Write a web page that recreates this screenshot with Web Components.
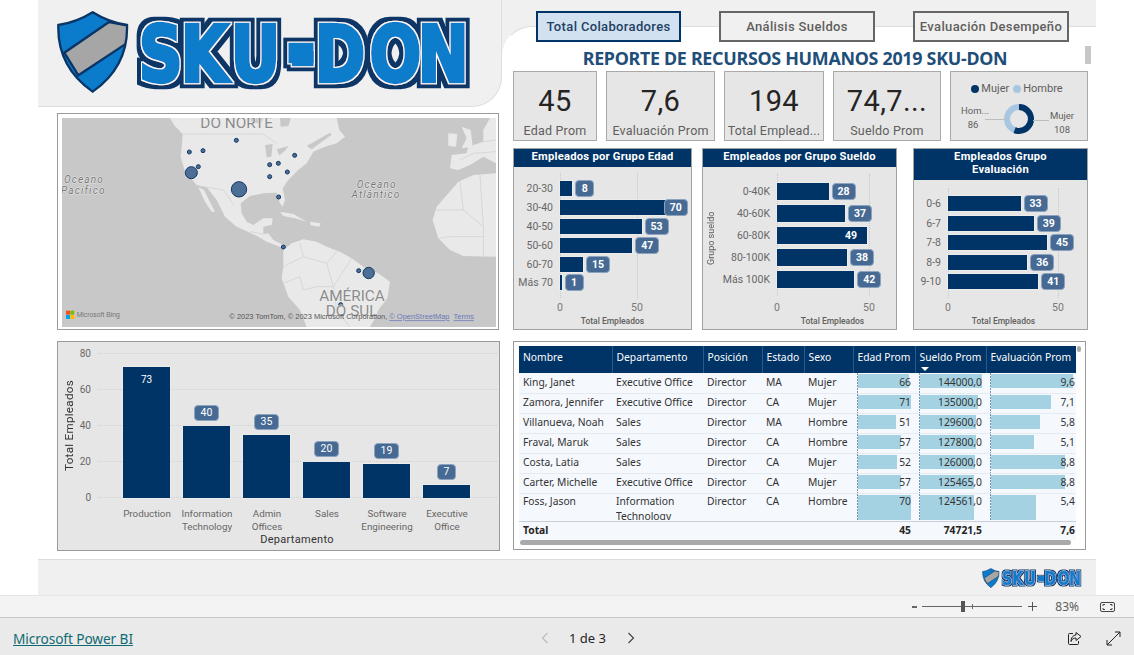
<!DOCTYPE html>
<html lang="es">
<head>
<meta charset="utf-8">
<title>Reporte SKU-DON</title>
<style>
  html, body { margin: 0; height: 655px; overflow: hidden; background: #fff; font-family: "Noto Sans", "Liberation Sans", sans-serif; }
</style>
</head>
<body>
<report-shell>
  <sku-logo slot="brand" width="420"></sku-logo>
  <map-card slot="map"></map-card>
  <column-card slot="columns"></column-card>

  <report-tab slot="tabs" active style="width:145px">Total Colaboradores</report-tab>
  <report-tab slot="tabs" style="width:156px">Análisis Sueldos</report-tab>
  <report-tab slot="tabs" style="width:156px">Evaluación Desempeño</report-tab>

  <kpi-card slot="kpis" data-value="45" data-label="Edad Prom" style="width:84px"></kpi-card>
  <kpi-card slot="kpis" data-value="7,6" data-label="Evaluación Prom" style="width:109px"></kpi-card>
  <kpi-card slot="kpis" data-value="194" data-label="Total Emplead..." style="width:100px"></kpi-card>
  <kpi-card slot="kpis" data-value="74,7..." data-label="Sueldo Prom" style="width:108px"></kpi-card>
  <gender-donut slot="kpis" style="width:138px"></gender-donut>

  <hbar-card slot="charts" style="width:179px" data-title="Empleados por Grupo Edad" data-label-w="46" data-unit="1.54" data-pitch="18.9" data-bar="15" data-top="12"
    data-items='[["20-30",8],["30-40",70,"clamp"],["40-50",53],["50-60",47],["60-70",15],["Más 70",1]]'></hbar-card>
  <hbar-card slot="charts" style="width:195px;margin-left:1px" data-title="Empleados por Grupo Sueldo" data-axis="Grupo sueldo" data-label-w="74" data-unit="1.84" data-pitch="22" data-bar="17" data-top="13"
    data-items='[["0-40K",28],["40-60K",37],["60-80K",49,"in"],["80-100K",38],["Más 100K",42]]'></hbar-card>
  <hbar-card slot="charts" style="width:175px;margin-left:7px" data-title="Empleados Grupo Evaluación" data-wrap="1" data-label-w="34" data-unit="2.2" data-pitch="19.5" data-bar="15" data-top="14"
    data-items='[["0-6",33],["6-7",39],["7-8",45],["8-9",36],["9-10",41]]'></hbar-card>

  <staff-table slot="table"></staff-table>
  <sku-logo slot="footer" width="101"></sku-logo>
</report-shell>
<zoom-bar></zoom-bar>
<page-bar></page-bar>

<script>
const DIN = '"Roboto", "Liberation Sans", sans-serif';
const NAVY = '#003366';

class ReportShell extends HTMLElement {
  constructor() {
    super();
    this.attachShadow({ mode: 'open' });
  }

  connectedCallback() {
    this.shadowRoot.innerHTML = `
      <style>
        :host { display: block; width: 1058px; height: 595px; margin-left: 38px; }
        .main { display: grid; grid-template-columns: 464px 594px; height: 559px; }
        .left { display: flex; flex-direction: column; }
        .brand {
          box-sizing: border-box; height: 107px; padding: 10px 0 0 18px; background: #f0f0f0;
          border-right: 1px solid #dedede; border-bottom: 1px solid #dedede; border-bottom-right-radius: 30px;
        }
        .mapslot { padding: 6px 0 0 19px; }
        .colslot { padding: 11px 0 0 19px; }
        .right { background: linear-gradient(#f0f0f0 70px, #fff 70px); }
        .panel {
          box-sizing: border-box; height: 533px; margin-top: 26px; padding-left: 10px; background: #fff;
          border-top: 1px solid #dedede; border-left: 1px solid transparent; border-top-left-radius: 30px;
          display: flex; flex-direction: column;
        }
        .tabs { display: flex; gap: 38px; margin: -16px 0 0 23px; }
        h1 {
          margin: 6px 0 0 0; height: 21px; padding-right: 19px; font: 700 17.9px/21px "Noto Sans", sans-serif; color: #1f4e79;
          text-align: center; letter-spacing: -.3px; white-space: nowrap;
        }
        .thumb { width: 6px; height: 18px; background: #c8c8c8; margin: -23px 0 0 572px; }
        .kpis { display: flex; gap: 9px; margin-top: 7px; }
        .charts { display: flex; gap: 9px; margin-top: 7px; }
        .table { margin-top: 11px; }
        .foot {
          box-sizing: border-box; height: 36px; background: #f0f0f0; border-top: 1px solid #dcdcdc;
          display: flex; justify-content: flex-end; padding: 8px 13px 0 0;
        }
      </style>
      <div class="main">
        <div class="left">
          <div class="brand"><slot name="brand"></slot></div>
          <div class="mapslot"><slot name="map"></slot></div>
          <div class="colslot"><slot name="columns"></slot></div>
        </div>
        <div class="right">
          <div class="panel">
            <div class="tabs"><slot name="tabs"></slot></div>
            <h1>REPORTE DE RECURSOS HUMANOS 2019 SKU-DON</h1>
            <div class="thumb"></div>
            <div class="kpis"><slot name="kpis"></slot></div>
            <div class="charts"><slot name="charts"></slot></div>
            <div class="table"><slot name="table"></slot></div>
          </div>
        </div>
      </div>
      <div class="foot"><slot name="footer"></slot></div>
    `;
  }
}

class SkuLogo extends HTMLElement {
  constructor() {
    super();
    this.attachShadow({ mode: 'open' });
  }

  connectedCallback() {
    const w = Number(this.getAttribute('width'));
    const h = w * 250 / 1260;
    // pen position of each letter, squeezed by scaleX below
    const xs = [304, 430, 580, 758, 832, 996, 1141].map(x => (x / 0.78).toFixed(1)).join(' ');
    this.shadowRoot.innerHTML = `
      <style>:host { display: block; } svg { display: block; }</style>
      <svg width="${w}" height="${h}" viewBox="55 30 1260 250">
        <defs>
          <filter id="edge" filterUnits="userSpaceOnUse" x="280" y="30" width="1040" height="250">
            <feMorphology in="SourceAlpha" operator="dilate" radius="4" result="w"/>
            <feMorphology in="SourceAlpha" operator="dilate" radius="15" result="n"/>
            <feFlood flood-color="#fff"/>
            <feComposite in2="w" operator="in" result="wf"/>
            <feFlood flood-color="#0a3566"/>
            <feComposite in2="n" operator="in" result="nf"/>
            <feMerge>
              <feMergeNode in="nf"/>
              <feMergeNode in="wf"/>
              <feMergeNode in="SourceGraphic"/>
            </feMerge>
          </filter>
          <clipPath id="shield"><path d="M165 37Q215 68 268 75Q272 200 165 275Q58 200 62 75Q115 68 165 37Z"/></clipPath>
        </defs>
        <path d="M165 37Q215 68 268 75Q272 200 165 275Q58 200 62 75Q115 68 165 37Z" fill="#0a7ccb"/>
        <g clip-path="url(#shield)">
          <path d="M214 66L280 78L270 128L122 226L80 158Z" fill="#a6a6a6" stroke="#0a3566" stroke-width="7"/>
        </g>
        <path d="M165 37Q215 68 268 75Q272 200 165 275Q58 200 62 75Q115 68 165 37Z" fill="none" stroke="#0a3566" stroke-width="7"/>
        <g filter="url(#edge)">
          <text transform="scale(.78 1)" x="${xs}" y="244" font-family="DejaVu Sans" font-weight="700" font-size="232"
            fill="#0a7ccb" stroke="#0a7ccb" stroke-width="13" stroke-linejoin="miter">SKU-DON</text>
          <rect x="752" y="128" width="76" height="62" fill="#0a7ccb"/>
        </g>
      </svg>
    `;
  }
}

class ReportTab extends HTMLElement {
  constructor() {
    super();
    this.attachShadow({ mode: 'open' });
  }

  connectedCallback() {
    const active = this.hasAttribute('active');
    this.shadowRoot.innerHTML = `
      <style>
        :host {
          display: flex; align-items: center; justify-content: center; box-sizing: border-box; height: 31px;
          border: 2px solid ${active ? NAVY : '#666'}; background: ${active ? '#d2e1f0' : '#f0f0f0'};
          color: ${active ? '#1f3f63' : '#605e5c'}; font: 500 13px ${DIN}; letter-spacing: .35px; white-space: nowrap;
        }
      </style>
      <slot></slot>
    `;
  }
}

class KpiCard extends HTMLElement {
  constructor() {
    super();
    this.attachShadow({ mode: 'open' });
  }

  connectedCallback() {
    this.shadowRoot.innerHTML = `
      <style>
        :host {
          display: flex; flex-direction: column; align-items: center; box-sizing: border-box; height: 70px;
          background: #e6e6e6; border: 1px solid #a9a9a9; font-family: ${DIN}; overflow: hidden;
        }
        .v { margin-top: 11px; height: 36px; font-size: 29px; line-height: 36px; color: #252423; letter-spacing: .4px; }
        .l { margin-top: 4px; font-size: 12.5px; line-height: 16px; color: #605e5c; letter-spacing: .2px; white-space: nowrap; }
      </style>
      <div class="v">${this.dataset.value}</div>
      <div class="l">${this.dataset.label}</div>
    `;
  }
}

class GenderDonut extends HTMLElement {
  constructor() {
    super();
    this.attachShadow({ mode: 'open' });
  }

  connectedCallback() {
    const c = 2 * Math.PI * 12;
    const m = c * 108 / 194;
    this.shadowRoot.innerHTML = `
      <style>
        :host {
          display: flex; flex-direction: column; box-sizing: border-box; height: 70px; background: #e6e6e6;
          border: 1px solid #a9a9a9; color: #605e5c; font: 10.5px ${DIN};
        }
        .legend { display: flex; justify-content: center; gap: 4px; margin-top: 10px; padding-right: 4px; height: 14px; line-height: 14px; font-size: 11px; }
        .legend span { display: flex; align-items: center; gap: 2px; }
        i { width: 8px; height: 8px; border-radius: 50%; }
        .row { display: flex; align-items: center; margin-top: 3px; padding-left: 10px; }
        .a, .b { font-size: 9.5px; line-height: 14px; text-align: center; }
        .a { width: 24px; margin-top: -1px; }
        .b { width: 26px; margin-top: 10px; }
        .lead { height: 1px; background: #bdbdbd; width: 20px; margin-top: 2px; }
        svg { display: block; margin: 2px -2px 0; }
      </style>
      <div class="legend">
        <span><i style="background:${NAVY}"></i>Mujer</span>
        <span><i style="background:#a9c6e0"></i>Hombre</span>
      </div>
      <div class="row">
        <div class="a">Hom...<br>86</div>
        <div class="lead"></div>
        <svg width="32" height="32" viewBox="0 0 32 32">
          <circle cx="16" cy="16" r="12" fill="none" stroke="#a9c6e0" stroke-width="6"/>
          <circle cx="16" cy="16" r="12" fill="none" stroke="${NAVY}" stroke-width="6" stroke-dasharray="${m} ${c}" transform="rotate(-90 16 16)"/>
        </svg>
        <div class="lead" style="width:16px;margin-top:4px"></div>
        <div class="b">Mujer<br>108</div>
      </div>
    `;
  }
}

class MapCard extends HTMLElement {
  constructor() {
    super();
    this.attachShadow({ mode: 'open' });
  }

  connectedCallback() {
    const pins = [[559,91,6],[418,126,6],[459,122,6],[445,170,6],[424,188,18],[567,238,23],[659,164,6],[685,160,6],[734,136,6],[712,186,6],[659,200,6],[686,261,6],[700,411,6],[926,482,6],[956,489,17],[872,584,6]];
    this.shadowRoot.innerHTML = `
      <style>
        :host { display: block; box-sizing: border-box; width: 442px; height: 217px; padding: 4px 2px 2px 4px; background: #fff; border: 1px solid #9a9a9a; }
        svg { display: block; }
        .lbl { font-family: ${DIN}; fill: #8b8b8b; stroke: #f2f2f2; stroke-width: 3; paint-order: stroke; text-anchor: middle; }
        .sea { font-family: ${DIN}; font-style: italic; font-size: 30px; letter-spacing: 3.5px; fill: #777; stroke: #e8e8e8; stroke-width: 3; paint-order: stroke; text-anchor: middle; }
        .cr { font: 22.4px "Liberation Sans", sans-serif; fill: #555; }
        .ln { fill: #6a78b8; text-decoration: underline; }
      </style>
      <svg width="434" height="209" viewBox="36 24 1302 627" preserveAspectRatio="none">
        <rect x="36" y="24" width="1302" height="627" fill="#c8c8c8"/>
        <g fill="#e9e9e9">
          <path d="M360 24L372 45L398 72L396 100L392 140L405 185L440 225L470 232L500 270L525 320L560 350L600 368L625 380L650 395L690 410L705 418L700 405L670 390L655 370L640 372L640 350L665 345L668 325L640 325L610 345L590 335L575 310L572 280L600 258L640 250L680 248L690 280L698 290L705 270L698 235L715 210L745 180L770 160L790 125L825 110L860 100L885 80L868 60L860 24Z"/>
          <path d="M445 232L462 240L478 272L495 306L485 305L465 275Z"/>
          <path d="M700 420L725 400L760 388L800 395L830 410L870 425L905 445L940 470L985 490L1020 515L1012 565L985 600L975 625L960 651L770 651L750 600L715 560L695 505L700 470Z"/>
          <path d="M690 305L730 312L770 335L735 325L700 318Z"/>
          <path d="M780 335L812 340L808 350L782 346Z"/>
          <path d="M1148 330L1160 290L1195 250L1225 215L1270 195L1338 190L1338 440L1240 438L1200 420L1165 385Z"/>
          <path d="M1200 175L1205 135L1250 130L1255 110L1300 95L1300 60L1320 24L1338 24L1338 160L1300 140L1260 165L1225 180Z"/>
          <path d="M1235 50L1262 60L1268 110L1235 115L1250 85Z"/>
          <path d="M1195 70L1222 72L1218 110L1195 108Z"/>
        </g>
        <g fill="#c8c8c8">
          <path d="M645 105L668 102L664 140L650 142Z"/>
          <path d="M680 118L715 108L705 122L688 136Z"/>
          <path d="M770 108L840 68L845 74L785 118Z"/>
          <path d="M690 24L722 24L715 48L692 50Z"/>
          <path d="M600 24L640 24L632 40L606 38Z"/>
        </g>
        <g fill="none" stroke="#d2d2d2" stroke-width="2.5">
          <path d="M395 72H640L680 100"/>
          <path d="M446 228L520 240L552 285"/>
          <path d="M600 365L640 372"/>
          <path d="M750 400L760 440L700 470"/>
          <path d="M760 440L830 460L860 425M830 460L850 530L905 445"/>
          <path d="M700 520L750 500L760 540L800 530L850 530L860 600L900 651"/>
          <path d="M1160 300H1240L1300 350V440M1230 215L1240 300M1200 380H1300M1165 385L1200 380M1290 195L1300 350"/>
          <path d="M1230 150L1270 130L1338 125M1300 95L1338 90"/>
        </g>
        ${pins.map(([x, y, r]) => `<circle cx="${x}" cy="${y}" r="${r}" fill="#4d6e96" stroke="#133563" stroke-width="3"/>`).join('')}
        <text class="lbl" x="560" y="54" font-size="46">DO NORTE</text>
        <text class="lbl" x="906" y="572" font-size="46">AMÉRICA</text>
        <text class="lbl" x="905" y="618" font-size="46">DO SUL</text>
        <text class="sea" x="102" y="219">Oceano</text>
        <text class="sea" x="100" y="251">Pacífico</text>
        <text class="sea" x="980" y="233">Oceano</text>
        <text class="sea" x="978" y="265">Atlântico</text>
        <rect x="48" y="602" width="12" height="12" fill="#f25022"/>
        <rect x="61" y="602" width="12" height="12" fill="#7fba00"/>
        <rect x="48" y="615" width="12" height="12" fill="#00a4ef"/>
        <rect x="61" y="615" width="12" height="12" fill="#ffb900"/>
        <text class="cr" x="80" y="621" style="fill:#777;font-size:20.5px">Microsoft Bing</text>
        <text class="cr" x="538" y="628">© 2023 TomTom, © 2023 Microsoft Corporation, <tspan class="ln">© OpenStreetMap</tspan>  <tspan class="ln" dx="6">Terms</tspan></text>
      </svg>
    `;
  }
}

class HbarCard extends HTMLElement {
  constructor() {
    super();
    this.attachShadow({ mode: 'open' });
  }

  connectedCallback() {
    const d = this.dataset;
    const items = JSON.parse(d.items);
    const unit = Number(d.unit);
    const pitch = Number(d.pitch);
    const bar = Number(d.bar);
    const labelW = Number(d.labelW);
    const rows = items.map(([label, value, mode]) => `
      <div class="row">
        <div class="cat">${label}</div>
        <div class="bar" style="width:${value * unit}px">${mode === 'in' ? `<span class="in">${value}</span>` : ''}</div>
        ${mode === 'in' ? '' : `<div class="pill" style="width:${value > 9 ? 24 : 19}px;margin-left:${mode === 'clamp' ? -4 : 3}px">${value}</div>`}
      </div>`).join('');
    this.shadowRoot.innerHTML = `
      <style>
        :host {
          display: flex; flex-direction: column; box-sizing: border-box; height: 182px; background: #e6e6e6;
          border: 1px solid #a2a2a2; font-family: ${DIN}; color: #605e5c; position: relative;
        }
        header {
          background: ${NAVY}; color: #fff; font-weight: 700; font-size: 11.2px; line-height: 13px; text-align: center;
          padding: ${d.wrap ? '1px 30px 4px' : '1px 4px 4px'}; letter-spacing: .25px;
        }
        .plot { position: relative; margin: ${d.top}px 0 0 ${labelW}px; }
        .grid { position: absolute; top: -6px; bottom: -6px; width: 0; border-left: 1px dotted #c9c9c9; }
        .row { position: relative; display: flex; align-items: center; height: ${pitch}px; }
        .cat { position: absolute; right: 100%; margin-right: 7px; font-size: 10.5px; white-space: nowrap; color: #666; }
        .bar { display: flex; align-items: center; justify-content: flex-end; height: ${bar}px; background: ${NAVY}; box-shadow: 0 0 0 .5px #fff8; }
        .in { color: #fff; font-size: 10.5px; font-weight: 700; margin-right: 10px; }
        .pill {
          position: relative; box-sizing: border-box; height: 17px; background: #466a93; border: 1px solid #8ba3bf; border-radius: 4px;
          color: #fff; font-size: 10.5px; font-weight: 700; line-height: 15px; text-align: center;
        }
        .ticks { display: flex; gap: ${50 * unit}px; margin-left: ${labelW}px; position: absolute; top: 152px; font-size: 10.5px; color: #777; }
        .ticks span { width: 0; display: flex; justify-content: center; }
        .title { position: absolute; top: 167px; left: ${labelW}px; right: 0; padding-right: ${d.axis ? 8 : labelW === 34 ? 28 : 26}px; text-align: center; font-size: 8.5px; font-weight: 500; color: #605e5c; white-space: nowrap; }
        .axis { position: absolute; left: 3px; top: 52px; height: 74px; writing-mode: vertical-rl; transform: rotate(180deg); text-align: center; font-size: 9px; color: #605e5c; white-space: nowrap; }
      </style>
      <header>${d.title}</header>
      <div class="plot">
        <div class="grid" style="left:0"></div>
        <div class="grid" style="left:${50 * unit}px"></div>
        ${rows}
      </div>
      <div class="ticks"><span>0</span><span>50</span></div>
      <div class="title">Total Empleados</div>
      ${d.axis ? `<div class="axis">${d.axis}</div>` : ''}
    `;
  }
}

class ColumnCard extends HTMLElement {
  constructor() {
    super();
    this.attachShadow({ mode: 'open' });
  }

  connectedCallback() {
    const data = [['Production', 73, 'in'], ['Information<br>Technology', 40], ['Admin<br>Offices', 35], ['Sales', 20], ['Software<br>Engineering', 19], ['Executive<br>Office', 7]];
    this.shadowRoot.innerHTML = `
      <style>
        :host {
          display: block; box-sizing: border-box; width: 443px; height: 210px; background: #e6e6e6;
          border: 1px solid #9a9a9a; font-family: ${DIN}; color: #605e5c; padding: 11px 0 0 5px;
        }
        .top { display: flex; height: 145px; }
        .ytitle { width: 12px; writing-mode: vertical-rl; transform: rotate(180deg); text-align: center; font-size: 11.6px; line-height: 12px; color: #333; letter-spacing: .3px; white-space: nowrap; }
        .ticks { width: 16px; margin-right: 7px; display: flex; flex-direction: column; justify-content: space-between; font-size: 10px; color: #666; text-align: right; }
        .ticks div { height: 1px; line-height: 1px; }
        .plot { position: relative; width: 399px; display: flex; align-items: flex-end; gap: 13px; padding-left: 25px; box-sizing: border-box; }
        .lines { position: absolute; inset: 0; display: flex; flex-direction: column; justify-content: space-between; }
        .lines div { border-top: 1px dotted #d0d0d0; }
        .col { position: relative; width: 47px; display: flex; flex-direction: column; align-items: center; }
        .bar { width: 47px; background: ${NAVY}; color: #fff; font-size: 10px; text-align: center; padding-top: 7px; box-sizing: border-box; box-shadow: 0 0 0 .5px #fff8; }
        .pill {
          box-sizing: border-box; height: 16px; margin-bottom: 5px; background: #466a93; border: 1px solid #8ba3bf;
          border-radius: 4px; color: #fff; font-size: 10.5px; line-height: 14px; text-align: center;
        }
        .names { display: flex; margin: 9px 0 0 54px; }
        .names div { width: 60px; text-align: center; font-size: 9.8px; line-height: 13px; color: #666; }
        .xtitle { padding-left: 18px; width: 432px; text-align: center; font-size: 11px; line-height: 13px; color: #333; letter-spacing: .3px; }
      </style>
      <div class="top">
        <div class="ytitle">Total Empleados</div>
        <div class="ticks"><div>80</div><div>60</div><div>40</div><div>20</div><div>0</div></div>
        <div class="plot">
          <div class="lines"><div></div><div></div><div></div><div></div><div></div></div>
          ${data.map(([, v, mode]) => `
            <div class="col">
              ${mode === 'in' ? '' : `<div class="pill" style="width:${v > 9 ? 25 : 19}px">${v}</div>`}
              <div class="bar" style="height:${v * 1.8}px">${mode === 'in' ? v : ''}</div>
            </div>`).join('')}
        </div>
      </div>
      <div class="names">${data.map(([n]) => `<div>${n}</div>`).join('')}</div>
      <div class="xtitle">Departamento</div>
    `;
  }
}

class StaffTable extends HTMLElement {
  constructor() {
    super();
    this.attachShadow({ mode: 'open' });
  }

  dataBar(text, start, width, height, pad) {
    const fill = `linear-gradient(#a4d2e2,#a4d2e2) ${start}px 1px / ${width}px ${height}px no-repeat`;
    const axis = `repeating-linear-gradient(#6f97b0 0 2px, transparent 2px 3px) ${start - 1}px 0 / 1px 100% no-repeat`;
    return `<td class="num" style="background:${axis},${fill};padding-right:${pad}px">${text}</td>`;
  }

  connectedCallback() {
    const rows = [
      ['King, Janet', 'Executive Office', 'MA', 'Mujer', 66, 51, '144000,0', 62, '9,6', 82],
      ['Zamora, Jennifer', 'Executive Office', 'CA', 'Mujer', 71, 53, '135000,0', 58, '7,1', 60],
      ['Villanueva, Noah', 'Sales', 'MA', 'Hombre', 51, 38, '129600,0', 56, '5,8', 49],
      ['Fraval, Maruk', 'Sales', 'CA', 'Hombre', 57, 43, '127800,0', 56, '5,1', 43],
      ['Costa, Latia', 'Sales', 'CA', 'Mujer', 52, 39, '126000,0', 55, '8,8', 74],
      ['Carter, Michelle', 'Executive Office', 'CA', 'Mujer', 57, 43, '125465,0', 54, '8,8', 74],
      ['Foss, Jason', 'Information Technology', 'CA', 'Hombre', 70, 53, '124561,0', 54, '5,4', 45]
    ];
    const body = rows.map((r, i) => {
      const h = i === 6 ? 25 : 14;
      return `<tr class="${i === 6 ? 'tall' : ''}">
        <td>${r[0]}</td><td><div class="clip">${r[1]}</div></td><td>Director</td><td>${r[2]}</td><td>${r[3]}</td>
        ${this.dataBar(r[4], 5, r[5], h, 4)}${this.dataBar(r[6], 5, r[7], h, 4)}${this.dataBar(r[8], 5, r[9], h, 1)}
      </tr>`;
    }).join('');
    this.shadowRoot.innerHTML = `
      <style>
        :host { display: flex; box-sizing: border-box; width: 573px; height: 209px; padding: 4px 4px 0 5px; background: #fff; border: 1px solid #9a9a9a; }
        .thumb { width: 4px; height: 6px; margin-left: 1px; border-radius: 2px; background: #aaa; }
        table { border-collapse: collapse; table-layout: fixed; width: 557px; font: 10.3px/14px "Noto Sans", sans-serif; color: #333; background: #f5f8fd; }
        th { height: 27px; padding: 0 3px 6px 4px; background: ${NAVY}; color: #fff; font-weight: 400; text-align: left; border-left: 1px solid #2c5a88; white-space: nowrap; box-sizing: border-box; }
        th:first-child { border-left: 0; }
        th.sort { position: relative; }
        th.sort::after { content: ""; position: absolute; left: 5px; bottom: 2px; border: 4px solid transparent; border-top-color: #fff; border-bottom: 0; }
        td { height: 20px; padding: 0 2px 2px 4px; border-bottom: 1px solid #e6ebf2; white-space: nowrap; box-sizing: border-box; vertical-align: middle; }
        td.num { text-align: right; }
        tr.tall td { height: 28px; vertical-align: top; padding-top: 0; padding-bottom: 0; border-bottom: 1px solid #c8ced6; }
        .clip { white-space: normal; overflow: hidden; }
        tr.tall .clip { height: 26px; line-height: 15px; }
        tfoot td { height: 19px; font-weight: 700; border-bottom: 0; color: #252423; }
        .sb { height: 5px; width: 551px; margin: 0 0 0 1px; border-radius: 3px; background: #a9a9a9; }
      </style>
      <div>
        <table>
          <colgroup><col style="width:93px"><col style="width:91px"><col style="width:59px"><col style="width:42px"><col style="width:49px"><col style="width:62px"><col style="width:71px"><col style="width:90px"></colgroup>
          <thead>
            <tr><th>Nombre</th><th>Departamento</th><th>Posición</th><th>Estado</th><th>Sexo</th><th>Edad Prom</th><th class="sort">Sueldo Prom</th><th>Evaluación Prom</th></tr>
          </thead>
          <tbody>${body}</tbody>
          <tfoot>
            <tr><td>Total</td><td></td><td></td><td></td><td></td><td class="num" style="padding-right:4px">45</td><td class="num" style="padding-right:4px">74721,5</td><td class="num" style="padding-right:1px">7,6</td></tr>
          </tfoot>
        </table>
        <div class="sb"></div>
      </div>
      <div class="thumb"></div>
    `;
  }
}

class ZoomBar extends HTMLElement {
  constructor() {
    super();
    this.attachShadow({ mode: 'open' });
  }

  connectedCallback() {
    this.shadowRoot.innerHTML = `
      <style>
        :host {
          display: flex; align-items: center; justify-content: flex-end; box-sizing: border-box; height: 23px;
          background: #f3f3f3; border-top: 1px solid #e6e6e6; border-bottom: 1px solid #c8c8c8; padding-right: 19px;
          font: 12px "Noto Sans", sans-serif; color: #605e5c;
        }
        .minus { width: 5px; height: 2px; background: #666; margin-right: 5px; }
        .track { position: relative; width: 100px; height: 1px; background: #666; }
        .knob { position: absolute; left: 39px; top: -5px; width: 4px; height: 11px; background: #555; }
        .tick { position: absolute; left: 50px; top: -2px; width: 1px; height: 5px; background: #666; }
        .plus { margin: 0 0 0 6px; width: 9px; height: 9px; background: linear-gradient(#555,#555) 0 4px / 9px 1px no-repeat, linear-gradient(#555,#555) 4px 0 / 1px 9px no-repeat; }
        .pct { margin: 0 21px 0 18px; }
        svg { display: block; }
      </style>
      <div class="minus"></div>
      <div class="track"><div class="tick"></div><div class="knob"></div></div>
      <div class="plus"></div>
      <div class="pct">83%</div>
      <svg width="15" height="10" viewBox="0 0 15 10" fill="none" stroke="#444"><rect x=".5" y=".5" width="14" height="9" rx="1.5"/><path d="M3 4V2.5H5M10 2.5H12V4M12 6V7.5H10M5 7.5H3V6" /></svg>
    `;
  }
}

class PageBar extends HTMLElement {
  constructor() {
    super();
    this.attachShadow({ mode: 'open' });
  }

  connectedCallback() {
    this.shadowRoot.innerHTML = `
      <style>
        :host {
          display: flex; align-items: center; box-sizing: border-box; height: 37px; background: #eaeaea; padding: 3px 0 0 13px;
          font: 13.7px "Noto Sans", sans-serif; color: #252423;
        }
        a { width: 120px; color: #0f6b73; text-decoration: underline; white-space: nowrap; letter-spacing: -.1px; }
        .pager { display: flex; align-items: center; margin-left: 408px; }
        .num { margin: 0 21px 0 20px; font-size: 13px; white-space: nowrap; }
        .icons { display: flex; gap: 24px; margin-left: auto; padding-right: 13px; }
        svg { display: block; }
      </style>
      <a href="#">Microsoft Power BI</a>
      <div class="pager">
        <svg width="8" height="12" viewBox="0 0 8 12" fill="none" stroke="#bdbdbd" stroke-width="1.2"><path d="M6.5 1L1.5 6L6.5 11"/></svg>
        <div class="num">1 de 3</div>
        <svg width="8" height="12" viewBox="0 0 8 12" fill="none" stroke="#444" stroke-width="1.2"><path d="M1.5 1L6.5 6L1.5 11"/></svg>
      </div>
      <div class="icons">
        <svg width="15" height="15" viewBox="0 0 15 15" fill="none" stroke="#222"><path d="M6 2.5H2.5A1 1 0 0 0 1.5 3.5V12.5A1 1 0 0 0 2.5 13.5H10.5A1 1 0 0 0 11.5 12.5V10"/><path d="M9 1.5L14 5.5L9 9.5V7C6.5 7 5 8 4 10.5C4 7 6 4 9 4Z"/></svg>
        <svg width="15" height="15" viewBox="0 0 15 15" fill="none" stroke="#222"><path d="M1 14L14 1M9 1H14V6M1 9V14H6"/></svg>
      </div>
    `;
  }
}

customElements.define('report-shell', ReportShell);
customElements.define('sku-logo', SkuLogo);
customElements.define('report-tab', ReportTab);
customElements.define('kpi-card', KpiCard);
customElements.define('gender-donut', GenderDonut);
customElements.define('map-card', MapCard);
customElements.define('hbar-card', HbarCard);
customElements.define('column-card', ColumnCard);
customElements.define('staff-table', StaffTable);
customElements.define('zoom-bar', ZoomBar);
customElements.define('page-bar', PageBar);
</script>
</body>
</html>
